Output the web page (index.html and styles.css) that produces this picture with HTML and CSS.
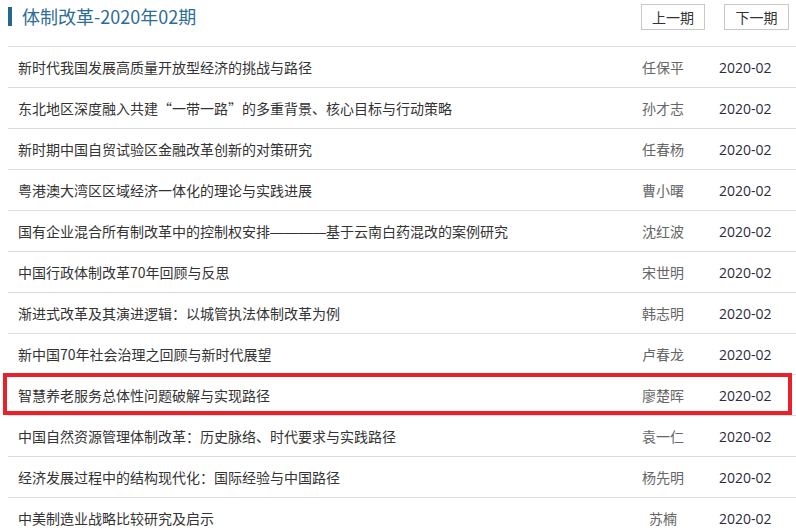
FILE: index.html
```html
<!DOCTYPE html>
<html lang="zh-CN">
<head>
<meta charset="utf-8">
<title>体制改革-2020年02期</title>
<link rel="stylesheet" href="styles.css">
</head>
<body>
<div class="page">
  <div class="header">
    <h1 class="title">体制改革-2020年02期</h1>
    <div class="nav">
      <a class="btn" href="#">上一期</a>
      <a class="btn" href="#">下一期</a>
    </div>
  </div>
  <ul class="list">
    <li class="row"><span class="t">新时代我国发展高质量开放型经济的挑战与路径</span><span class="a">任保平</span><span class="d">2020-02</span></li>
    <li class="row"><span class="t">东北地区深度融入共建“一带一路”的多重背景、核心目标与行动策略</span><span class="a">孙才志</span><span class="d">2020-02</span></li>
    <li class="row"><span class="t">新时期中国自贸试验区金融改革创新的对策研究</span><span class="a">任春杨</span><span class="d">2020-02</span></li>
    <li class="row"><span class="t">粤港澳大湾区区域经济一体化的理论与实践进展</span><span class="a">曹小曙</span><span class="d">2020-02</span></li>
    <li class="row"><span class="t">国有企业混合所有制改革中的控制权安排<span class="dash">————</span>基于云南白药混改的案例研究</span><span class="a">沈红波</span><span class="d">2020-02</span></li>
    <li class="row"><span class="t">中国行政体制改革70年回顾与反思</span><span class="a">宋世明</span><span class="d">2020-02</span></li>
    <li class="row"><span class="t">渐进式改革及其演进逻辑：以城管执法体制改革为例</span><span class="a">韩志明</span><span class="d">2020-02</span></li>
    <li class="row"><span class="t">新中国70年社会治理之回顾与新时代展望</span><span class="a">卢春龙</span><span class="d">2020-02</span></li>
    <li class="row marked"><span class="t">智慧养老服务总体性问题破解与实现路径</span><span class="a">廖楚晖</span><span class="d">2020-02</span><span class="mark"></span></li>
    <li class="row"><span class="t">中国自然资源管理体制改革：历史脉络、时代要求与实践路径</span><span class="a">袁一仁</span><span class="d">2020-02</span></li>
    <li class="row"><span class="t">经济发展过程中的结构现代化：国际经验与中国路径</span><span class="a">杨先明</span><span class="d">2020-02</span></li>
    <li class="row"><span class="t">中美制造业战略比较研究及启示</span><span class="a">苏楠</span><span class="d">2020-02</span></li>
  </ul>
</div>
</body>
</html>
```

FILE: styles.css
```css
html, body {
  margin: 0;
  padding: 0;
  background: #fff;
  overflow: hidden;
}
body {
  font-family: "Noto Sans CJK SC", "Noto Sans", sans-serif;
  color: #333;
}
.page {
  margin-left: 8px;
  width: 788px;
}
.header {
  display: flex;
  align-items: center;
  justify-content: space-between;
  height: 47px;
  box-sizing: border-box;
  padding-bottom: 13px;
  border-bottom: 1px solid #dcdcdc;
}
.title {
  margin: 0;
  font-family: "Noto Sans CJK SC", sans-serif;
  font-weight: normal;
  font-size: 18px;
  line-height: 19px;
  color: #2d6d96;
  border-left: 4px solid #24688f;
  padding-left: 10px;
}
.nav {
  display: flex;
  gap: 19px;
  margin-right: 7px;
}
.btn {
  display: flex;
  align-items: center;
  justify-content: center;
  width: 64px;
  height: 26px;
  box-sizing: border-box;
  border: 1px solid #c8c8c8;
  font-size: 14px;
  color: #333;
  text-decoration: none;
  background: #fff;
}
.btn + .btn {
  width: 65px;
}
.list {
  list-style: none;
  margin: 0;
  padding: 0;
}
.row {
  position: relative;
  display: grid;
  grid-template-columns: 1fr 90px 88px;
  align-items: center;
  height: 41px;
  box-sizing: border-box;
  padding-left: 10px;
  border-bottom: 1px solid #dcdcdc;
  font-size: 14px;
}
.t {
  color: #333;
  white-space: nowrap;
}
.dash {
  font-family: "Liberation Sans", sans-serif;
  letter-spacing: 0;
}
.a {
  text-align: center;
  color: #666;
}
.d {
  padding-left: 11px;
  font-family: "Open Sans", "Noto Sans CJK SC", sans-serif;
  font-size: 14px;
  color: #2b2b3a;
}
.mark {
  position: absolute;
  top: -2px;
  left: -5px;
  right: 4px;
  height: 42px;
  box-sizing: border-box;
  border: 4px solid #e8202a;
  pointer-events: none;
}
```
